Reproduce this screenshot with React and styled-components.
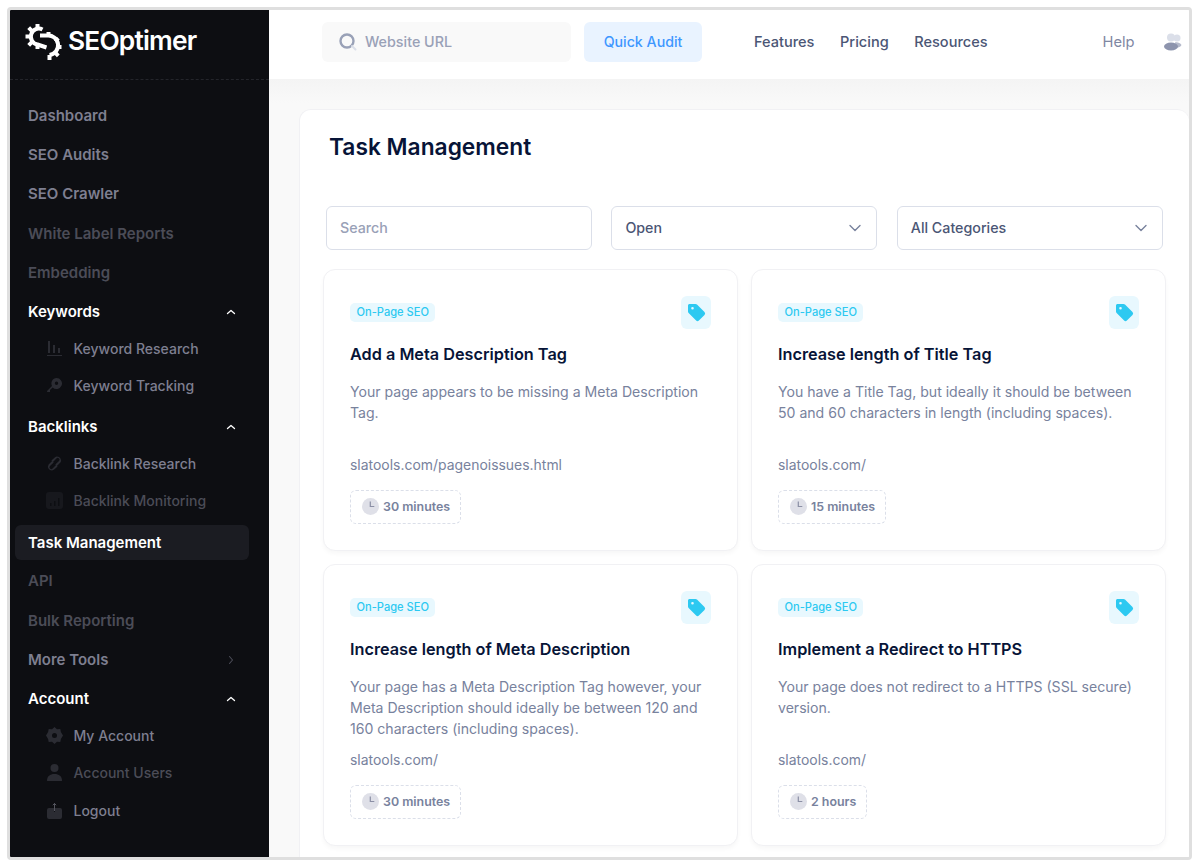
import React from "react";
import styled, { createGlobalStyle } from "styled-components";

const Global = createGlobalStyle`
  html, body { margin: 0; padding: 0; background: #fff; }
  body { font-family: Inter, "Liberation Sans", sans-serif; -webkit-font-smoothing: antialiased; }
  * { box-sizing: border-box; }
`;

const Frame = styled.div`
  width: 1185px; height: 853px; margin: 7px 0 0 7px;
  border: 3px solid #dfdfdf; border-radius: 4px;
  display: flex; overflow: hidden; background: #f9f9f9;
`;
const Sidebar = styled.aside`
  width: 259px; flex: none; background: #0d0e12; display: flex; flex-direction: column;
`;
const Brand = styled.div`
  height: 70px; flex: none; display: flex; align-items: center; padding: 0 0 6px 15px; gap: 6px;
  border-bottom: 1px dashed #24252b;
`;
const BrandName = styled.span`
  color: #fff; font-size: 26.3px; font-weight: 600; letter-spacing: -0.8px; line-height: 1;
`;
const Nav = styled.nav`
  display: flex; flex-direction: column; padding: 15.5px 20px 0 5px;
`;
const NavItem = styled.div`
  height: 39.3px; flex: none; display: flex; align-items: center; justify-content: space-between;
  padding: 0 12px 0 13px; font-size: 15px; font-weight: 600; border-radius: 6px;
  color: ${p => p.$tone === "white" ? "#fff" : p.$tone === "dim" ? "#4b4c57" : "#7e7f90"};
`;
const ActiveItem = styled(NavItem)`
  height: 35px; margin: 2.6px 0 1.7px; background: #1b1c22; color: #fff;
`;
const SubList = styled.div`
  display: flex; flex-direction: column; margin-top: -1.7px; padding-bottom: 2.8px;
`;
const SubItem = styled.div`
  height: 37.3px; display: flex; align-items: center; gap: 10.5px; padding-left: 31px;
  font-size: 14px; font-weight: 500;
  color: ${p => p.$dim ? "#4b4c57" : "#7e7f90"};
`;
const SubIcon = styled.svg`
  width: 17px; height: 17px; flex: none; display: block;
`;
const Chevron = styled.svg`
  width: 12px; height: 12px; display: block; flex: none;
`;

const Main = styled.main`
  flex: 1; min-width: 0; display: flex; flex-direction: column;
`;
const TopBar = styled.header`
  height: 69px; flex: none; background: #fff; display: flex; align-items: center; padding: 0 0 6px 53px;
`;
const UrlBox = styled.div`
  width: 249px; height: 40px; background: #f9f9f9; border-radius: 6px; display: flex; align-items: center;
  gap: 8px; padding-left: 17px; color: #99a1b7; font-size: 14.3px; font-weight: 500;
`;
const AuditButton = styled.div`
  width: 118px; height: 40px; margin-left: 13px; background: #e9f3ff; border-radius: 6px; color: #3e97ff;
  font-size: 14.2px; font-weight: 500; display: flex; align-items: center; justify-content: center;
`;
const Links = styled.div`
  display: flex; gap: 25.6px; margin-left: 52px; color: #4b5675; font-size: 14.55px; font-weight: 500;
`;
const Help = styled.span`
  margin-left: 115px; color: #7f88a3; font-size: 14.7px; font-weight: 400;
`;
const Users = styled.svg`
  width: 18px; height: 18px; margin-left: 29px; display: block;
`;
const Content = styled.div`
  flex: 1; min-height: 0; padding: 30px 0 0 30px;
  background: linear-gradient(#f4f4f4, #f9f9f9 24px);
`;
const Panel = styled.section`
  height: 800px; margin-right: 0; background: #fff; border: 1px solid #f1f1f4; border-right: 0;
  border-radius: 12px 12px 0 0; padding: 0 0 0 23px;
`;
const Title = styled.h1`
  margin: 21px 0 0 6px; font-size: 22.75px; line-height: 32px; font-weight: 600; color: #071437;
`;
const Filters = styled.div`
  display: grid; grid-template-columns: repeat(3, 266px); column-gap: 19.4px; margin: 43px 0 0 3px;
`;
const Field = styled.div`
  height: 44px; border: 1px solid #dbdfe9; border-radius: 6px; padding: 0 14px 1px 13px; display: flex;
  align-items: center; justify-content: space-between; font-size: 14.25px; font-weight: 500;
  color: ${p => p.$muted ? "#99a1b7" : "#4b5675"};
`;
const Grid = styled.div`
  display: grid; grid-template-columns: repeat(2, 415px); gap: 13px; margin-top: 19px;
`;
const Card = styled.article`
  height: 282px; background: #fff; border: 1px solid #f1f1f4; border-radius: 12px;
  box-shadow: 0 3px 4px rgba(0,0,0,.03); padding: 26px 26px 0; display: flex; flex-direction: column;
`;
const CardTop = styled.div`
  display: flex; align-items: center; justify-content: space-between; height: 33px;
`;
const Badge = styled.span`
  height: 19px; padding: 0 6.5px 1px; border-radius: 5px; background: #e8f8fe; color: #2dc9f1; font-size: 11.1px;
  font-weight: 500; display: flex; align-items: center;
`;
const TagBox = styled.div`
  width: 30px; height: 33px; border-radius: 6px; background: #e8f8fe; display: flex; align-items: center; justify-content: center;
`;
const CardTitle = styled.h2`
  margin: 13px 0 0; font-size: 16.25px; line-height: 24px; font-weight: 600; color: #071437;
`;
const Desc = styled.p`
  margin: 15px 0 0; height: 63px; font-size: 14.08px; line-height: 21px; color: #78829d; font-weight: 400;
`;
const Url = styled.div`
  margin-top: 10px; font-size: 13.95px; line-height: 21px; color: #78829d;
`;
const Time = styled.div`
  margin-top: 15px; align-self: flex-start; height: 34px; border: 1px dashed #dbdfe9; border-radius: 6px;
  padding: 0 10px 1px 11px; display: flex; align-items: center; gap: 4px; font-size: 12.4px; font-weight: 600; color: #78829d;
`;

const Up = () => <Chevron viewBox="0 0 12 12" fill="none" stroke="#fff" strokeWidth="1.3" strokeLinecap="round" strokeLinejoin="round"><path d="M2.5 7.5 6 4.5l3.5 3" /></Chevron>;
const Right = () => <Chevron viewBox="0 0 12 12" fill="none" stroke="#4b4c57" strokeWidth="1.1" strokeLinecap="round" strokeLinejoin="round"><path d="M4.5 2.5 7.5 6l-3 3.5" /></Chevron>;

const Logo = () => (
  <svg width="37" height="40" viewBox="0 0 37 40" fill="none" stroke="#fff" strokeWidth="4" strokeLinejoin="round" style={{ display: "block", flex: "none" }}>
    <path d="M17.500 7.500A8 8 0 1 0 12.500 22.500L21.500 25.500" />
    <path d="M12.500 6.500V2M6.800 8.800 3.700 5.700M4.500 14.500H.5M6.800 20.200 3.700 23.300M12.500 22.500V27" />
    <path d="M15 13.500H22A8.500 8.500 0 0 1 24.500 33" />
    <path d="M24.500 33V38M30.200 30.700 33.300 33.800M32.500 25H36.500M30.200 19.300 33.300 16.200M23.500 13.500V10" />
  </svg>
);

const icons = {
  bars: <><path d="M2 1h2v12H2zM7 5h2v8H7zM12 8h2v5h-2zM1 15h15v1H1z" /></>,
  key: <><path fillRule="evenodd" d="M10.5 1a5.5 5.5 0 1 1-3.9 9.4L4 13v2H1.500A1 1 0 0 1 1 14l5-5A5.5 5.5 0 0 1 10.5 1zm0 3.5a1.700 1.700 0 1 0 0 3.400 1.700 1.700 0 0 0 0-3.400z" /></>,
  link: <><path d="M11 1.500a4 4 0 0 1 3.400 6.100l-3.500 3.500-1.600-1.600L13 6a1.800 1.800 0 0 0-2.600-2.600L7 7 5.400 5.500 8.800 2.400A4 4 0 0 1 11 1.500zM6 15.500a4 4 0 0 1-3.400-6.100L6.100 6l1.600 1.500L4 11a1.800 1.800 0 0 0 2.600 2.600L10 10l1.600 1.500-3.400 3.100a4 4 0 0 1-2.200.9z" /></>,
  chart: <><path fillRule="evenodd" d="M3 0h11a3 3 0 0 1 3 3v11a3 3 0 0 1-3 3H3a3 3 0 0 1-3-3V3a3 3 0 0 1 3-3zm1 11v3h1.500v-3zm4-2v5h1.500V9zm4-3v8h1.500V6z" /></>,
  gear: <><path fillRule="evenodd" d="M8.500 0l2.500 2.300 3.300-.4.600 3.200L17 8.500l-2.100 3.400-.6 3.200-3.300-.4L8.500 17l-2.500-2.300-3.300.4-.6-3.200L0 8.500l2.100-3.400.6-3.200 3.300.4zm0 6a2.500 2.500 0 1 0 0 5 2.500 2.500 0 0 0 0-5z" /></>,
  user: <><circle cx="8.500" cy="4" r="4" /><path d="M1 17c0-5 3-7 7.500-7S16 12 16 17z" /></>,
  logout: <><path d="M8 6H3a2 2 0 0 0-2 2v7a2 2 0 0 0 2 2h11a2 2 0 0 0 2-2V8a2 2 0 0 0-2-2H9v4H8z" /><path d="M8.500 9V1.500M6.800 3.200l1.700-1.700 1.700 1.700" fill="none" stroke="#5c5d68" strokeWidth=".9" /></>,
};

const Sub = ({ icon, dim, children }) => (
  <SubItem $dim={dim}>
    <SubIcon viewBox="0 0 17 17" fill={icon === "chart" ? "#17181d" : "#2b2c33"}>{icons[icon]}</SubIcon>
    {children}
  </SubItem>
);

const ChevDown = () => (
  <svg width="14" height="14" viewBox="0 0 14 14" fill="none" stroke="#78829d" strokeWidth="1.4" strokeLinecap="round" strokeLinejoin="round" style={{ display: "block" }}><path d="M2 4.500 7 9.500l5-5" /></svg>
);

const Tag = () => (
  <svg width="19" height="19" viewBox="0 0 19 19" style={{ display: "block" }}>
    <path fill="#2dc9f1" fillRule="evenodd" d="M2.500 1h6c.6 0 1.100.2 1.500.6l7.500 7.500a2 2 0 0 1 0 2.800l-5.600 5.600a2 2 0 0 1-2.800 0L1.600 10c-.4-.4-.6-.9-.6-1.500v-6C1 1.700 1.700 1 2.500 1zm3 3a1.300 1.300 0 1 0 0 2.600 1.300 1.300 0 0 0 0-2.600z" />
  </svg>
);

const Clock = () => (
  <svg width="17" height="17" viewBox="0 0 17 17" style={{ display: "block", flex: "none" }}>
    <circle cx="8.500" cy="8.500" r="8.500" fill="#dfe0e8" />
    <path d="M8.300 3.500v5h4" fill="none" stroke="#8b8fa5" strokeWidth="1.200" />
  </svg>
);

const tasks = [
  { t: "Add a Meta Description Tag", d: "Your page appears to be missing a Meta Description Tag.", u: "slatools.com/pagenoissues.html", m: "30 minutes" },
  { t: "Increase length of Title Tag", d: "You have a Title Tag, but ideally it should be between 50 and 60 characters in length (including spaces).", u: "slatools.com/", m: "15 minutes" },
  { t: "Increase length of Meta Description", d: "Your page has a Meta Description Tag however, your Meta Description should ideally be between 120 and 160 characters (including spaces).", u: "slatools.com/", m: "30 minutes" },
  { t: "Implement a Redirect to HTTPS", d: "Your page does not redirect to a HTTPS (SSL secure) version.", u: "slatools.com/", m: "2 hours" },
];

export default function App() {
  return (
    <>
      <Global />
      <Frame>
        <Sidebar>
          <Brand><Logo /><BrandName>SEOptimer</BrandName></Brand>
          <Nav>
            <NavItem>Dashboard</NavItem>
            <NavItem>SEO Audits</NavItem>
            <NavItem>SEO Crawler</NavItem>
            <NavItem $tone="dim">White Label Reports</NavItem>
            <NavItem $tone="dim">Embedding</NavItem>
            <NavItem $tone="white">Keywords<Up /></NavItem>
            <SubList>
              <Sub icon="bars">Keyword Research</Sub>
              <Sub icon="key">Keyword Tracking</Sub>
            </SubList>
            <NavItem $tone="white">Backlinks<Up /></NavItem>
            <SubList>
              <Sub icon="link">Backlink Research</Sub>
              <Sub icon="chart" dim>Backlink Monitoring</Sub>
            </SubList>
            <ActiveItem>Task Management</ActiveItem>
            <NavItem $tone="dim">API</NavItem>
            <NavItem $tone="dim">Bulk Reporting</NavItem>
            <NavItem>More Tools<Right /></NavItem>
            <NavItem $tone="white">Account<Up /></NavItem>
            <SubList>
              <Sub icon="gear">My Account</Sub>
              <Sub icon="user" dim>Account Users</Sub>
              <Sub icon="logout">Logout</Sub>
            </SubList>
          </Nav>
        </Sidebar>
        <Main>
          <TopBar>
            <UrlBox>
              <svg width="18" height="18" viewBox="0 0 18 18" fill="none" style={{ display: "block" }}>
                <circle cx="8" cy="8" r="6.500" stroke="#99a1b7" strokeWidth="2.400" />
                <path d="M13 13l3.500 3.500" stroke="#dbdfe9" strokeWidth="2" strokeLinecap="round" />
              </svg>
              Website URL
            </UrlBox>
            <AuditButton>Quick Audit</AuditButton>
            <Links><span>Features</span><span>Pricing</span><span>Resources</span></Links>
            <Help>Help</Help>
            <Users viewBox="0 0 18 18">
              <circle cx="13" cy="5" r="3.500" fill="#dbdfe9" />
              <path d="M11 9.500c2.500-.5 5 .2 6.500 2.500-1 2-3.500 2.800-6 2.500z" fill="#b5bacb" />
              <circle cx="7" cy="4.500" r="4" fill="#dbdfe9" />
              <ellipse cx="7" cy="13.500" rx="7" ry="4" fill="#8d94ad" />
            </Users>
          </TopBar>
          <Content>
            <Panel>
              <Title>Task Management</Title>
              <Filters>
                <Field $muted>Search</Field>
                <Field>Open<ChevDown /></Field>
                <Field>All Categories<ChevDown /></Field>
              </Filters>
              <Grid>
                {tasks.map(x => (
                  <Card key={x.t}>
                    <CardTop><Badge>On-Page SEO</Badge><TagBox><Tag /></TagBox></CardTop>
                    <CardTitle>{x.t}</CardTitle>
                    <Desc>{x.d}</Desc>
                    <Url>{x.u}</Url>
                    <Time><Clock />{x.m}</Time>
                  </Card>
                ))}
              </Grid>
            </Panel>
          </Content>
        </Main>
      </Frame>
    </>
  );
}
